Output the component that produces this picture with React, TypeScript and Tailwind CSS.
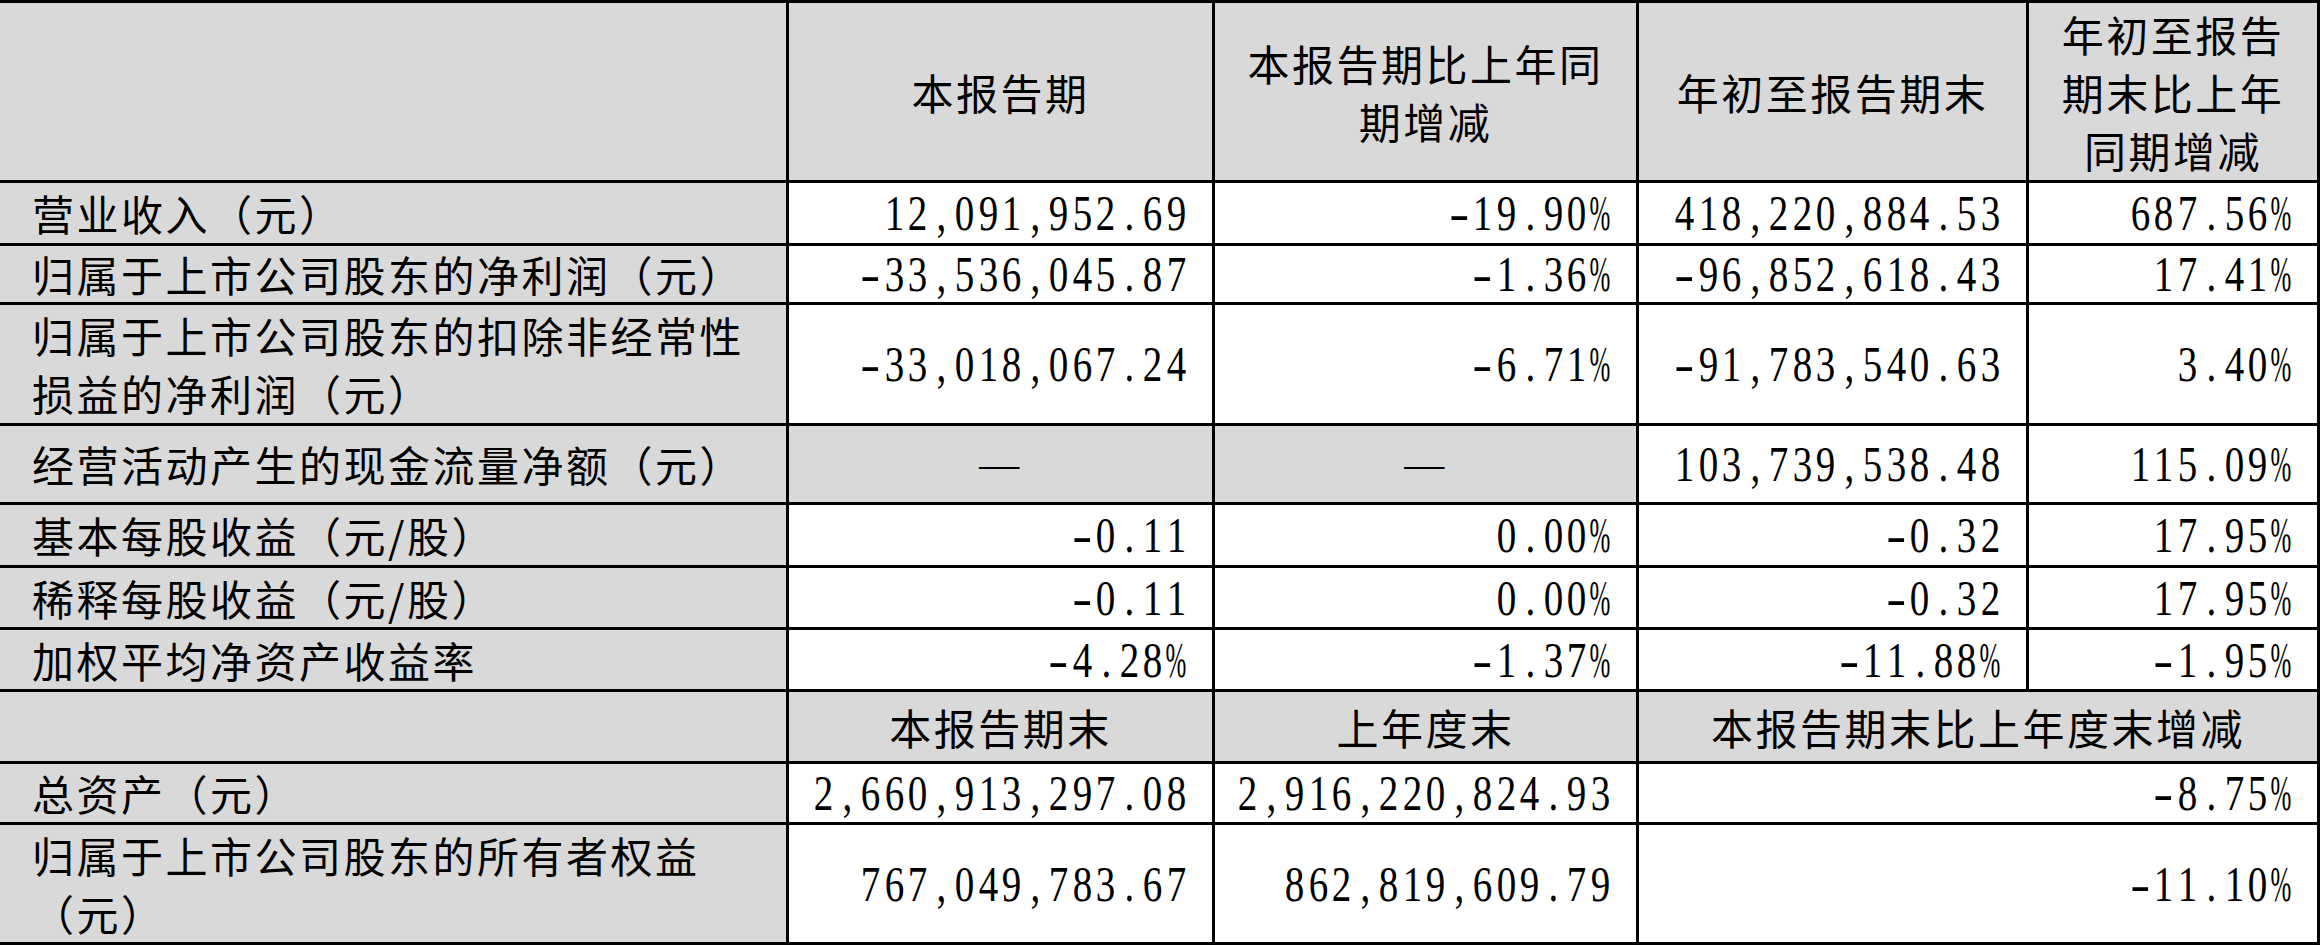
import React from "react";

const G = "bg-[#d9d9d9]";
const W = "bg-white";

function Num({ v }: { v: string }) {
  return (
    <span className="flex font-[family-name:'Liberation_Serif',serif] text-[50px] leading-none tracking-normal text-black">
      {v.split("").map((c, i) => {
        if (c === "%")
          return (
            <span key={i} className="flex w-[23.5px] justify-center">
              <span className="inline-block scale-x-[0.5]">%</span>
            </span>
          );
        if (c === "-")
          return (
            <span key={i} className="flex w-[23.5px] justify-center">
              <span className="inline-block scale-x-[1.2]">-</span>
            </span>
          );
        return (
          <span key={i} className="flex w-[23.5px] justify-center">
            <span className="inline-block scale-x-[0.78]">{c}</span>
          </span>
        );
      })}
    </span>
  );
}

function Label({ lines, bg = G }: { lines: string[]; bg?: string }) {
  return (
    <div className={`${bg} flex flex-col justify-center pl-[32px] whitespace-nowrap`}>
      {lines.map((l, i) => (
        <div key={i} className="leading-[58px]">
          {l}
        </div>
      ))}
    </div>
  );
}

function Head({ lines, bg = G, span = "" }: { lines: string[]; bg?: string; span?: string }) {
  return (
    <div className={`${bg} ${span} flex flex-col items-center justify-center whitespace-nowrap`}>
      {lines.map((l, i) => (
        <div key={i} className="leading-[58px]">
          {l}
        </div>
      ))}
    </div>
  );
}

function NumCell({ v, span = "" }: { v: string; span?: string }) {
  return (
    <div className={`${W} ${span} flex items-center justify-end pr-[24px]`}>
      <Num v={v} />
    </div>
  );
}

function Dash() {
  return (
    <div className={`${G} flex items-center justify-center`}>
      <span className="font-[family-name:'Liberation_Serif',serif] text-[40px]">—</span>
    </div>
  );
}

export default function App() {
  return (
    <div className="w-[2320px] h-[945px] bg-white">
      <div className="grid h-[945px] w-[2320px] grid-cols-[786px_423px_421px_387px_288px] grid-rows-[177px_60px_56px_118px_76px_60px_59px_59px_69px_58px_117px] gap-[3px] bg-black pt-[3px] pr-[3px] pb-[3px] font-[family-name:'Noto_Sans_CJK_SC',sans-serif] text-[42px] tracking-[2.5px] text-black">
        <div className={G} />
        <Head lines={["本报告期"]} />
        <Head lines={["本报告期比上年同", "期增减"]} />
        <Head lines={["年初至报告期末"]} />
        <Head lines={["年初至报告", "期末比上年", "同期增减"]} />

        <Label lines={["营业收入（元）"]} />
        <NumCell v="12,091,952.69" />
        <NumCell v="-19.90%" />
        <NumCell v="418,220,884.53" />
        <NumCell v="687.56%" />

        <Label lines={["归属于上市公司股东的净利润（元）"]} />
        <NumCell v="-33,536,045.87" />
        <NumCell v="-1.36%" />
        <NumCell v="-96,852,618.43" />
        <NumCell v="17.41%" />

        <Label lines={["归属于上市公司股东的扣除非经常性", "损益的净利润（元）"]} />
        <NumCell v="-33,018,067.24" />
        <NumCell v="-6.71%" />
        <NumCell v="-91,783,540.63" />
        <NumCell v="3.40%" />

        <Label lines={["经营活动产生的现金流量净额（元）"]} />
        <Dash />
        <Dash />
        <NumCell v="103,739,538.48" />
        <NumCell v="115.09%" />

        <Label lines={["基本每股收益（元/股）"]} />
        <NumCell v="-0.11" />
        <NumCell v="0.00%" />
        <NumCell v="-0.32" />
        <NumCell v="17.95%" />

        <Label lines={["稀释每股收益（元/股）"]} />
        <NumCell v="-0.11" />
        <NumCell v="0.00%" />
        <NumCell v="-0.32" />
        <NumCell v="17.95%" />

        <Label lines={["加权平均净资产收益率"]} />
        <NumCell v="-4.28%" />
        <NumCell v="-1.37%" />
        <NumCell v="-11.88%" />
        <NumCell v="-1.95%" />

        <div className={G} />
        <Head lines={["本报告期末"]} />
        <Head lines={["上年度末"]} />
        <Head lines={["本报告期末比上年度末增减"]} span="col-span-2" />

        <Label lines={["总资产（元）"]} />
        <NumCell v="2,660,913,297.08" />
        <NumCell v="2,916,220,824.93" />
        <NumCell v="-8.75%" span="col-span-2" />

        <Label lines={["归属于上市公司股东的所有者权益", "（元）"]} />
        <NumCell v="767,049,783.67" />
        <NumCell v="862,819,609.79" />
        <NumCell v="-11.10%" span="col-span-2" />
      </div>
    </div>
  );
}
